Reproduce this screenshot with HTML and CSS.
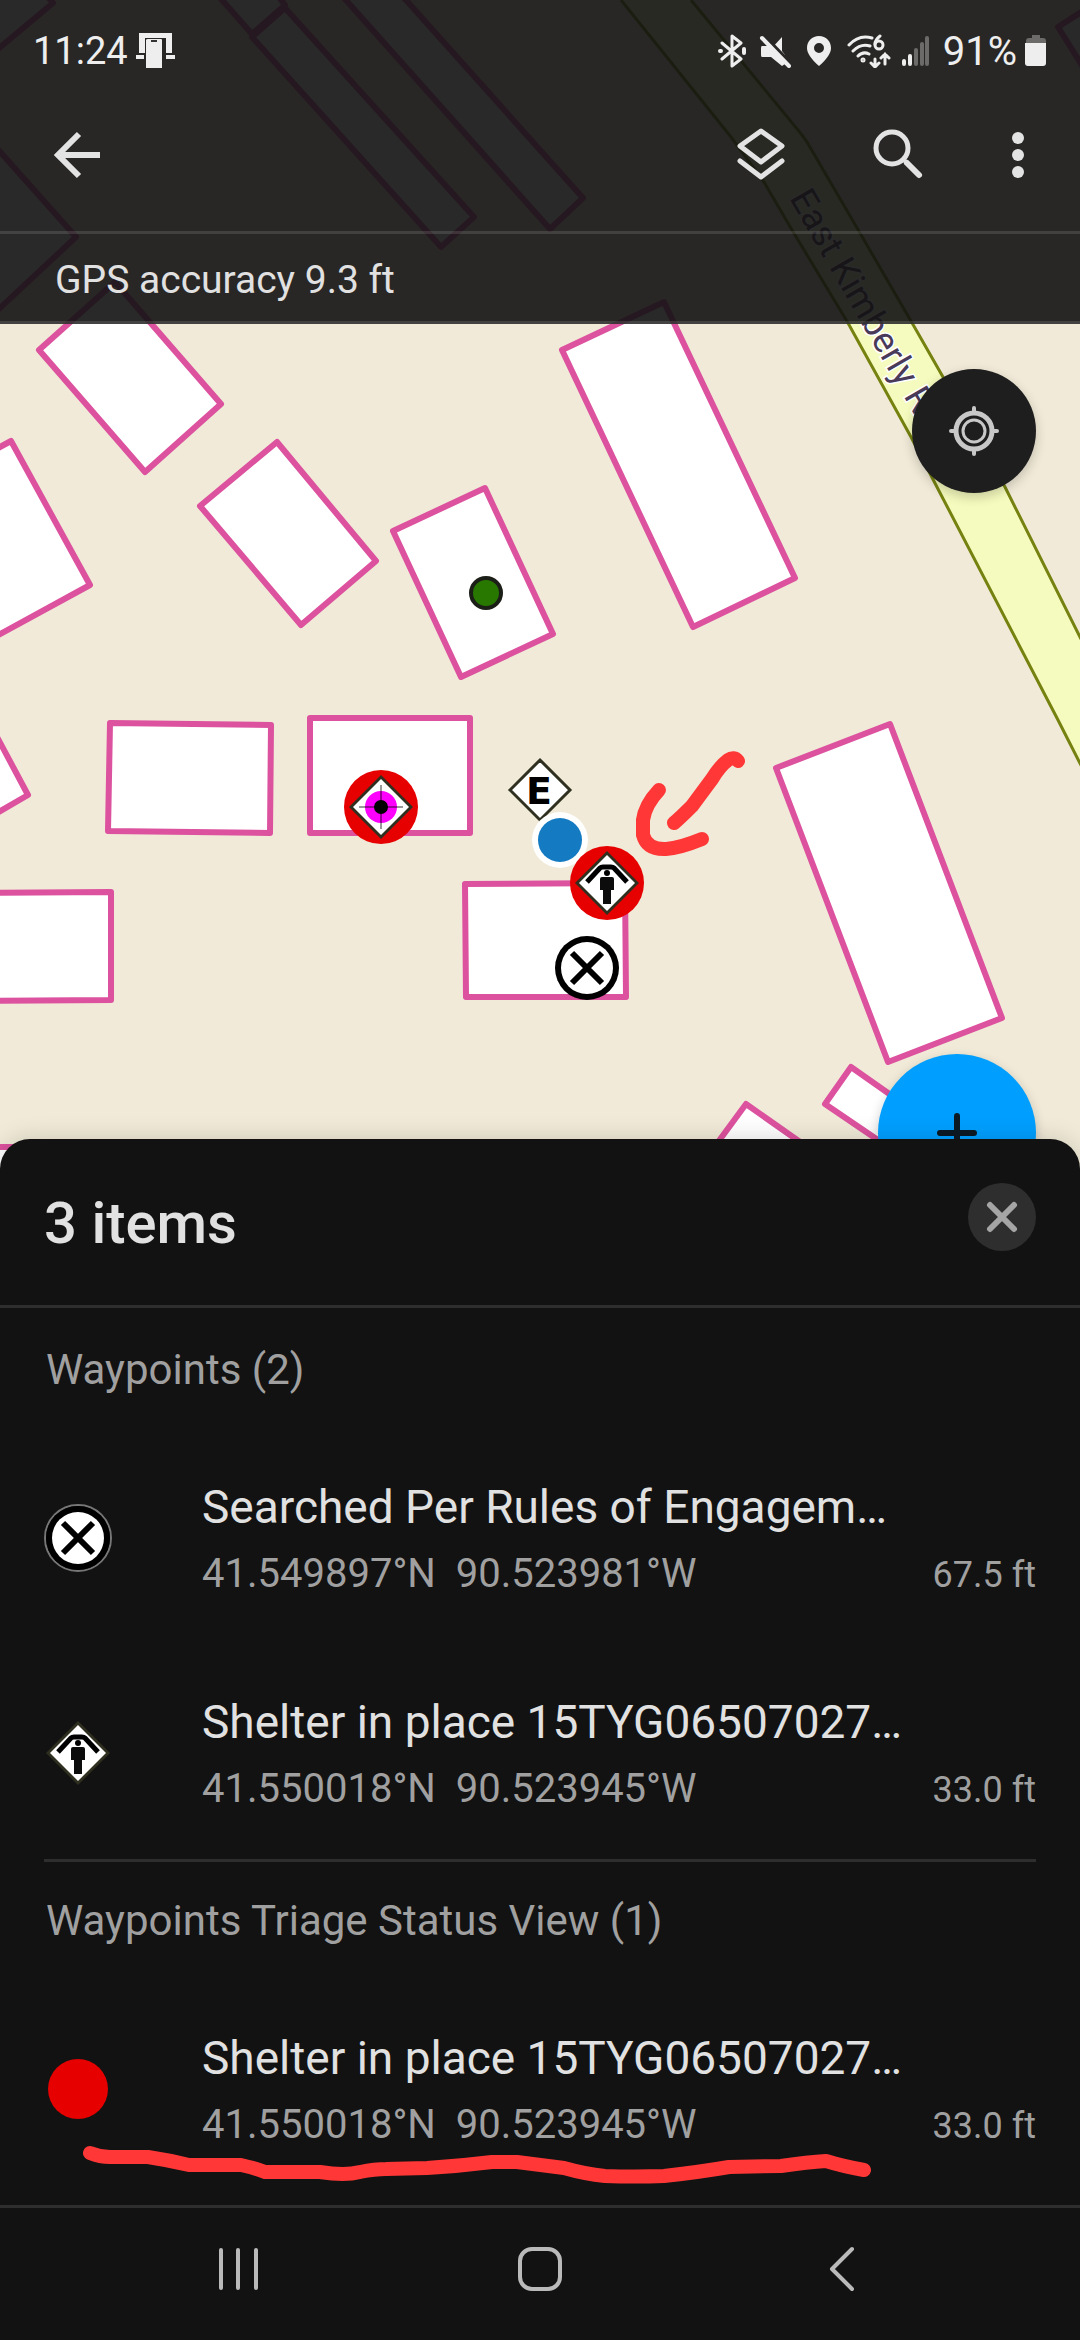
FILE: index.html
```html
<!DOCTYPE html>
<html lang="en">
<head>
    <meta charset="utf-8">
    <meta name="viewport" content="width=device-width, initial-scale=1">
    <title>Map</title>
    <link rel="stylesheet" href="styles.css">
</head>
<body>
    <!-- shared symbols for map markers and list icons -->
    <svg class="defs" width="0" height="0" aria-hidden="true">
        <symbol id="searched" viewBox="0 0 68 68">
            <circle cx="34" cy="34" r="32" fill="#000"/>
            <circle cx="34" cy="34" r="26" fill="#fff"/>
            <path d="M19 19l30 30M49 19L19 49" stroke="#000" stroke-width="6" fill="none"/>
        </symbol>
        <symbol id="shelter" viewBox="0 0 68 68">
            <path d="M34 2l32 32-32 32L2 34z" fill="#2f2f20"/>
            <path d="M34 6l28 28-28 28L6 34z" fill="#fff"/>
            <path d="M14 33l13-14q1-1 3-1h8q2 0 3 1l13 14" stroke="#000" stroke-width="5" fill="none"/>
            <circle cx="34" cy="24" r="3" fill="#000"/>
            <path d="M29 28h10q2 0 2 2v11h-3v14h-8V41h-3V30q0-2 2-2z" fill="#0c0c0c"/>
        </symbol>
    </svg>

    <div class="screen">
        <svg class="map" viewBox="0 0 1080 1180" role="img" aria-label="Map">
            <g class="road">
                <path class="road-fill" d="M621 0L731 137 764 182 792 230 848 323 911 437 1058 720 1090 783V657L1080 637 1005 487 943 377 915 328 860 233 807 142 691 0z"/>
                <path class="road-edge" d="M621 0L731 137 764 182 792 230 848 323 911 437 1058 720 1090 783"/>
                <path class="road-edge" d="M691 0L798 130Q803 136 807 142L860 233 915 328 943 377 1005 487 1080 637 1090 657"/>
            </g>
            <g class="buildings">
                <path d="M40-12L53 3-20 64-40 0z"/>
                <path d="M-30 118L76 237-30 336z"/>
                <path d="M200-25L252 34 285 5 258-30z"/>
                <path d="M252 37L285 8 474 217 441 247z"/>
                <path d="M320-29L550 229 583 198 380-29z"/>
                <path d="M1058 27L1100 0 1110 110z"/>
                <path d="M39 350L115 282 221 404 145 472z"/>
                <path d="M11 441L90 585-40 656V469z"/>
                <path d="M277 442L376 561 301 625 200 506z"/>
                <path d="M485 488L553 634 461 677 393 531z"/>
                <path d="M562 350L664 302 795 578 693 627z"/>
                <path d="M110 723L271 725 270 833 108 831z"/>
                <path d="M310 718H470V833H310z"/>
                <path d="M-20 893L111 892V1000L-20 1001z"/>
                <path d="M-20 705L28 795-20 823z"/>
                <path d="M465 884L625 883 626 997H466z"/>
                <path d="M-20 1147H60V1180H-20z"/>
                <path d="M776 768L890 724 1002 1018 888 1062z"/>
                <path d="M851 1067L825 1104 900 1155 925 1119z"/>
                <path d="M746 1104L710 1153 820 1156z"/>
            </g>
            <text class="road-name" transform="translate(789 198) rotate(60)">East Kimberly Rd</text>

            <circle cx="486" cy="593" r="15" fill="#287800" stroke="#1c1f18" stroke-width="4"/>

            <circle cx="381" cy="807" r="37" fill="#e60000"/>
            <path d="M381 775l32 32-32 32-32-32z" fill="#2f2f20"/>
            <path d="M381 779l28 28-28 28-28-28z" fill="#fff"/>
            <circle cx="381" cy="807" r="16" fill="#f0f"/>
            <path d="M381 785v44M359 807h44" stroke="#000" stroke-opacity=".4" stroke-width="2"/>
            <circle cx="381" cy="807" r="7" fill="#000"/>

            <path d="M540 760l30 30-30 30-30-30z" fill="#fff" stroke="#2f3020" stroke-width="3"/>
            <text class="marker-letter" x="539" y="804">E</text>

            <circle cx="560" cy="840" r="28" fill="#fff"/>
            <circle cx="560" cy="840" r="22" fill="#147ac2"/>

            <circle cx="607" cy="883" r="37" fill="#e60000"/>
            <use href="#shelter" x="573" y="849" width="68" height="68"/>
            <use href="#searched" x="553" y="934" width="68" height="68"/>

            <!-- freehand arrow -->
            <g class="ink">
                <path d="M738 761Q734 756 728 760 720 766 712 779L692 806Q680 818 674 823"/>
                <path d="M659 790Q645 805 643 820V835Q647 850 666 849 680 848 702 839"/>
            </g>
        </svg>

        <header class="top">
            <div class="status-bar">
                <span class="time">11:24</span>
                <svg class="icon-carrier" width="40" height="38" viewBox="0 0 40 38">
                    <path d="M3 1h33v20h-6V6H9v15H3z" fill="#eee"/>
                    <path d="M0 23h8v4H0zM30 23h9v4h-9z" fill="#eee"/>
                    <path d="M12 7h13q1 0 1 1v28H10V8q0-1 2-1z" fill="#eee"/>
                    <path d="M15 9h6" stroke="#333" stroke-width="2"/>
                </svg>
                <div class="status-icons">
                    <svg width="32" height="34" viewBox="0 0 32 34" fill="none" stroke="#eee" stroke-width="3" stroke-linecap="round" stroke-linejoin="round">
                        <path d="M6 9l19 16-9 7V2l9 7L6 25"/>
                        <path d="M4 17h1M28 15v4" stroke-width="4"/>
                    </svg>
                    <svg width="34" height="34" viewBox="0 0 34 34">
                        <path d="M4 12h6l3 3 11-12v14l3 4v9l-3 2-11-9H4q-1 0-1-2v-7q0-2 1-2z" fill="#eee"/>
                        <path d="M6 2l27 28" stroke="#282725" stroke-width="4"/>
                        <path d="M4 4l27 28" stroke="#eee" stroke-width="4" stroke-linecap="round"/>
                    </svg>
                    <svg width="34" height="34" viewBox="0 0 34 34">
                        <path fill-rule="evenodd" d="M17 2c-7 0-12 5-12 12 0 5 4 11 12 18 8-7 12-13 12-18 0-7-5-12-12-12zm0 7a5 5 0 1 1 0 10 5 5 0 0 1 0-10z" fill="#eee"/>
                    </svg>
                    <svg width="45" height="34" viewBox="0 0 45 34" fill="none" stroke="#eee" stroke-width="3" stroke-linecap="round">
                        <path d="M3 11Q13 0 26 4M7 17q8-8 17-5M12 22q5-5 11-2"/>
                        <path d="M29 25v7M25 29l4 4 4-4M39 30V20M35 24l4-4 4 4"/>
                        <circle cx="17" cy="26" r="1" />
                        <path d="M34 2q-5 4-5 8"/>
                        <circle cx="33" cy="11" r="4"/>
                    </svg>
                    <svg width="32" height="34" viewBox="0 0 32 34" fill="none" stroke="#eee" stroke-width="4" stroke-linecap="round">
                        <path d="M3 27v3M9 22v8"/>
                        <path d="M15 16v14M21 10v20M26 4v26" stroke="#6c6b69"/>
                    </svg>
                    <span class="battery">91%
                        <svg width="22" height="34" viewBox="0 0 22 34">
                            <path d="M7 1h8v3h3q3 0 3 3v4H1V7q0-3 3-3h3z" fill="#6c6b69"/>
                            <path d="M0 9h21v20q0 3-3 3H3q-3 0-3-3z" fill="#eee"/>
                        </svg>
                    </span>
                </div>
            </div>
            <div class="app-bar">
                <button class="icon-btn back" aria-label="Back">
                    <svg width="56" height="56" viewBox="0 0 56 56" fill="none" stroke="#e3e3e3" stroke-width="6">
                        <path d="M51 28H9M30 7L9 28l21 21"/>
                    </svg>
                </button>
                <button class="icon-btn" aria-label="Layers">
                    <svg width="56" height="56" viewBox="0 0 56 56" fill="none" stroke="#e3e3e3" stroke-width="5" stroke-linejoin="round" stroke-linecap="round">
                        <path d="M28 4l21 15-21 16L7 19zM7 34l21 16 21-16"/>
                    </svg>
                </button>
                <button class="icon-btn" aria-label="Search">
                    <svg width="56" height="56" viewBox="0 0 56 56" fill="none" stroke="#e3e3e3" stroke-linecap="round">
                        <circle cx="23" cy="21" r="16" stroke-width="5"/>
                        <path d="M35 33l3 3" stroke-width="4"/>
                        <path d="M38 36l12 12" stroke-width="6"/>
                    </svg>
                </button>
                <button class="icon-btn" aria-label="More options">
                    <svg width="26" height="56" viewBox="0 0 26 56" fill="#e3e3e3">
                        <circle cx="13" cy="11" r="6"/>
                        <circle cx="13" cy="28" r="6"/>
                        <circle cx="13" cy="45" r="6"/>
                    </svg>
                </button>
            </div>
            <div class="gps-bar">GPS accuracy 9.3 ft</div>
        </header>

        <div class="map-controls">
            <button class="locate" aria-label="My location">
                <svg width="56" height="56" viewBox="0 0 56 56" fill="none" stroke="#c8c8c8" stroke-linecap="round">
                    <circle cx="28" cy="28" r="18" stroke-width="5"/>
                    <circle cx="28" cy="28" r="11" stroke-width="3"/>
                    <path d="M28 5v4M28 47v4M5 28h4M47 28h4" stroke-width="4"/>
                </svg>
            </button>
            <button class="add" aria-label="Add">
                <svg width="56" height="56" viewBox="0 0 56 56" fill="none" stroke="#0c1a26" stroke-width="6" stroke-linecap="round">
                    <path d="M28 11v34M11 28h34"/>
                </svg>
            </button>
        </div>

        <main class="sheet">
            <div class="sheet-header">
                <h1>3 items</h1>
                <button class="close" aria-label="Close">
                    <svg width="68" height="68" viewBox="0 0 68 68" fill="none" stroke="#a5a5a5" stroke-width="6" stroke-linecap="round">
                        <path d="M22 22l24 24M46 22L22 46"/>
                    </svg>
                </button>
            </div>

            <div class="groups">
                <section class="group">
                    <h2>Waypoints (2)</h2>
                    <ul>
                        <li class="item">
                            <svg class="item-icon" viewBox="0 0 68 68">
                                <circle cx="34" cy="34" r="33" fill="none" stroke="#777" stroke-width="2"/>
                                <use href="#searched" width="68" height="68"/>
                            </svg>
                            <div class="item-text">
                                <div class="item-title">Searched Per Rules of Engagem…</div>
                                <div class="item-info"><span class="coords">41.549897°N  90.523981°W</span><span class="distance">67.5 ft</span></div>
                            </div>
                        </li>
                        <li class="item">
                            <svg class="item-icon" viewBox="0 0 68 68"><use href="#shelter" width="68" height="68"/></svg>
                            <div class="item-text">
                                <div class="item-title">Shelter in place 15TYG06507027…</div>
                                <div class="item-info"><span class="coords">41.550018°N  90.523945°W</span><span class="distance">33.0 ft</span></div>
                            </div>
                        </li>
                    </ul>
                </section>
                <section class="group">
                    <h2>Waypoints Triage Status View (1)</h2>
                    <ul>
                        <li class="item">
                            <svg class="item-icon" viewBox="0 0 68 68"><circle cx="34" cy="34" r="30" fill="#e60000"/></svg>
                            <div class="item-text">
                                <div class="item-title">Shelter in place 15TYG06507027…</div>
                                <div class="item-info"><span class="coords">41.550018°N  90.523945°W</span><span class="distance">33.0 ft</span></div>
                            </div>
                            <!-- freehand underline -->
                            <svg class="underline ink" viewBox="0 0 1080 55" aria-hidden="true">
                                <path d="M90 13Q100 17 110 17H148Q168 20 189 25H241Q255 28 265 32H320Q345 36 360 32 375 29 386 29L427 28Q460 26 492 22H517L564 28Q585 34 605 36 635 37 664 36 700 32 729 27L781 26Q808 22 826 21 842 26 864 30"/>
                            </svg>
                        </li>
                    </ul>
                </section>
            </div>

            <nav class="nav-bar">
                <button aria-label="Recents">
                    <svg width="56" height="56" viewBox="0 0 56 56"><path d="M11 9v38M28 9v38M46 9v38"/></svg>
                </button>
                <button aria-label="Home">
                    <svg width="56" height="56" viewBox="0 0 56 56"><rect x="8" y="8" width="40" height="40" rx="12"/></svg>
                </button>
                <button aria-label="Back">
                    <svg width="56" height="56" viewBox="0 0 56 56"><path d="M38 8L18 28l20 20"/></svg>
                </button>
            </nav>
        </main>
    </div>
</body>
</html>
```

FILE: styles.css
```css
* {
    box-sizing: border-box;
}
body {
    margin: 0;
    background: #121212;
    color: #e1e1e1;
    font-family: Roboto, "Liberation Sans", sans-serif;
}
h1, h2, ul {
    margin: 0;
    padding: 0;
    font-weight: 400;
}
ul {
    list-style: none;
}
button {
    padding: 0;
    border: none;
    background: none;
    cursor: pointer;
}
svg {
    display: block;
}
.defs {
    position: absolute;
}
.screen {
    position: relative;
    display: flex;
    flex-direction: column;
    min-height: 100vh;
    overflow: hidden;
    background: #f1ead8;
}

/* map */
.map {
    position: absolute;
    top: 0;
    left: 0;
    width: 100%;
}
.road-fill {
    fill: #f5fabe;
}
.road-edge {
    fill: none;
    stroke: #75820f;
    stroke-width: 3;
}
.buildings path {
    fill: #fff;
    stroke: #dc529e;
    stroke-width: 6;
    stroke-linejoin: round;
}
.road-name {
    font-size: 36px;
    fill: #483a58;
    stroke: #fff;
    stroke-width: 3;
    paint-order: stroke;
}
.marker-letter {
    font-family: "DejaVu Sans", sans-serif;
    font-size: 38px;
    font-weight: 700;
    text-anchor: middle;
}
.ink path {
    fill: none;
    stroke: #ff3737;
    stroke-width: 14;
    stroke-linecap: round;
    stroke-linejoin: round;
}

/* top bars */
.top {
    position: relative;
    background: rgba(18, 18, 18, 0.9);
    border-bottom: 3px solid rgba(255, 255, 255, 0.12);
}
.status-bar {
    display: flex;
    align-items: center;
    height: 78px;
    padding: 24px 33px 0;
    font-size: 40px;
    color: #eee;
}
.time {
    font-size: 38px;
}
.icon-carrier {
    margin-left: 8px;
}
.status-icons {
    display: flex;
    align-items: center;
    gap: 10px;
    margin-left: auto;
}
.battery {
    display: flex;
    align-items: center;
    gap: 8px;
}
.app-bar {
    display: flex;
    align-items: center;
    gap: 80px;
    height: 156px;
    padding: 0 49px;
    border-bottom: 3px solid rgba(255, 255, 255, 0.12);
}
.back {
    margin-right: auto;
}
.gps-bar {
    padding: 6px 55px 0;
    font-size: 39px;
    line-height: 81px;
}

/* floating buttons */
.map-controls {
    position: relative;
    display: flex;
    flex: 1;
    flex-direction: column;
    align-items: flex-end;
    justify-content: space-between;
    padding: 45px 44px 0;
}
.locate, .add {
    display: flex;
    align-items: center;
    justify-content: center;
    border-radius: 50%;
    box-shadow: 0 4px 12px rgba(0, 0, 0, 0.2);
}
.locate {
    width: 124px;
    height: 124px;
    background: #1e1e1e;
}
.add {
    width: 158px;
    height: 158px;
    margin-bottom: -73px;
    background: #009fff;
}

/* bottom sheet */
.sheet {
    position: relative;
    background: #121212;
    border-radius: 30px 30px 0 0;
    box-shadow: 0 0 24px rgba(0, 0, 0, 0.16);
}
.sheet-header {
    display: flex;
    align-items: flex-start;
    justify-content: space-between;
    padding: 44px 44px 42px;
    border-bottom: 3px solid #2e2e2e;
}
.sheet-header h1 {
    font-size: 58px;
    font-weight: 500;
    line-height: 80px;
}
.close {
    border-radius: 50%;
    background: #2e2e2e;
}
.groups {
    padding: 3px 0 10px;
    border-bottom: 3px solid #2e2e2e;
}
.group + .group::before {
    content: "";
    display: block;
    height: 3px;
    margin: 0 44px;
    background: #2e2e2e;
}
.group h2 {
    padding: 0 46px;
    font-size: 42px;
    line-height: 118px;
    color: #a0a0a0;
}
.item {
    position: relative;
    display: flex;
    align-items: center;
    gap: 90px;
    padding: 42px 44px 39px;
}
.item-icon {
    flex: none;
    width: 68px;
    height: 68px;
}
.item-text {
    flex: 1;
    min-width: 0;
}
.item-title {
    overflow: hidden;
    font-size: 46px;
    line-height: 72px;
    text-overflow: ellipsis;
    white-space: nowrap;
}
.item-info {
    display: flex;
    align-items: baseline;
    justify-content: space-between;
    font-size: 40px;
    line-height: 62px;
    color: #a0a0a0;
}
.coords {
    white-space: pre;
}
.distance {
    font-size: 36px;
    line-height: 40px;
}
.underline {
    position: absolute;
    top: 160px;
    left: 0;
    width: 100%;
}
.nav-bar {
    display: flex;
    height: 132px;
    padding: 0 8% 10px;
}
.nav-bar button {
    display: flex;
    flex: 1;
    align-items: center;
    justify-content: center;
}
.nav-bar svg {
    fill: none;
    stroke: #bababa;
    stroke-width: 4;
    stroke-linecap: round;
    stroke-linejoin: round;
}
```
